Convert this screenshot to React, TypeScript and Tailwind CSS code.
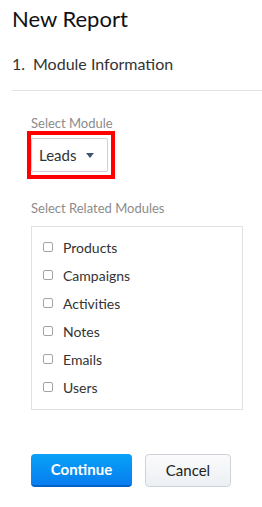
import React from "react";

const items = ["Products", "Campaigns", "Activities", "Notes", "Emails", "Users"];

export default function App() {
  return (
    <div className="w-[262px] h-[507px] bg-white overflow-hidden" style={{ fontFamily: "Lato, 'Open Sans', sans-serif" }}>
      <div className="pl-3 pt-[5px]">
        <h1 className="text-[22px] leading-[28px] text-[#111]">New Report</h1>
      </div>
      <div className="pl-3 mt-[21px] flex text-[16px] leading-[20px] text-[#333]">
        <span className="w-[21px]">1.</span>
        <span>Module Information</span>
      </div>
      <div className="ml-3 mt-[16px] border-t border-[#e3e3e3]" />
      <div className="pl-[31px] pt-[24px]">
        <div className="text-[13px] leading-[16px] text-[#8c8c8c]">Select Module</div>
        <div className="-ml-[4px] mt-[0px] w-[88px] border-4 border-[#ff0000] py-[3px] pr-[3px]">
          <div className="h-[34px] w-[77px] border border-[#cfcfcf] rounded-[2px] bg-white flex items-center pl-[7px]">
            <span className="text-[15px] text-[#333]">Leads</span>
            <svg width="8" height="5" viewBox="0 0 8 5" className="ml-[10px] mt-[1px]">
              <path d="M0 0 L8 0 L4 5 Z" fill="#3d5670" />
            </svg>
          </div>
        </div>
        <div className="mt-[21px] text-[13px] leading-[16px] text-[#8c8c8c]">Select Related Modules</div>
        <div className="mt-[10px] w-[212px] h-[184px] border border-[#e2e2e2] pt-[6px]">
          {items.map((it) => (
            <div key={it} className="h-[28px] flex items-center pl-[11px]">
              <span className="w-[10px] h-[10px] border border-[#a3a3a3] rounded-[2px] bg-white" />
              <span className="ml-[10px] text-[14px] text-[#333]">{it}</span>
            </div>
          ))}
        </div>
        <div className="mt-[44px] flex gap-[13px]">
          <button className="w-[101px] h-[33px] rounded-[4px] bg-gradient-to-b from-[#0aa2f7] to-[#0a7df0] border-b-2 border-[#0063c9] text-white text-[15px] font-bold">
            Continue
          </button>
          <button className="w-[86px] h-[33px] rounded-[4px] bg-gradient-to-b from-[#fbfbfc] to-[#eceff3] border border-[#cdd1d8] text-[#222] text-[15px]">
            Cancel
          </button>
        </div>
      </div>
    </div>
  );
}
